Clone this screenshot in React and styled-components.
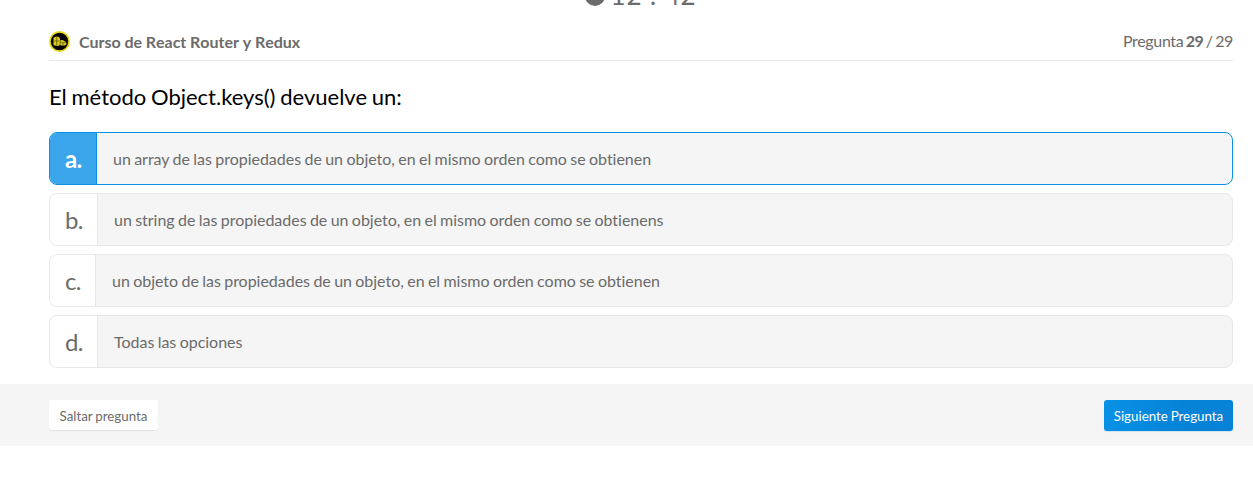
import React from "react";
import styled, { createGlobalStyle } from "styled-components";

const GlobalStyle = createGlobalStyle`
  * { box-sizing: border-box; }
  body {
    margin: 0;
    background: #fff;
    color: #6b6b6b;
    font-family: Lato, "Liberation Sans", sans-serif;
    font-size: 16px;
    font-variant-ligatures: none;
    overflow: hidden;
  }
`;

const Content = styled.main`
  padding: 0 20px 0 49px;
`;

const Timer = styled.div`
  display: flex;
  justify-content: center;
  align-items: flex-end;
  gap: 5px;
  height: 23px;
  padding-bottom: 15px;
  font-size: 26px;
  line-height: 26px;
  svg { flex: none; margin-bottom: 2px; }
`;

const Clock = styled.span`
  display: block;
  letter-spacing: 0.85px;
`;

const Header = styled.header`
  display: flex;
  align-items: center;
  height: 38px;
  padding-bottom: 1px;
  border-bottom: 1px solid #e8e8e8;
`;

const Course = styled.h1`
  flex: 1;
  margin: 0 0 0 9px;
  padding-top: 2px;
  font-size: 16px;
  line-height: 20px;
  font-weight: 700;
  letter-spacing: -0.04px;
  font-kerning: none;
`;

const Progress = styled.div`
  font-size: 16px;
  line-height: 20px;
  letter-spacing: -0.35px;
  word-spacing: -1.3px;
  b { letter-spacing: -0.5px; }
`;

const Question = styled.h2`
  margin: 21px 0 21px;
  color: #000;
  font-size: 22px;
  line-height: 29px;
  font-weight: 400;
  word-spacing: -0.9px;
`;

const Options = styled.div`
  display: flex;
  flex-direction: column;
  gap: 8px;
`;

const Option = styled.div`
  --line: ${(p) => (p.$selected ? "#0791e6" : "#e8e8e8")};
  display: flex;
  height: 53px;
  border: 1px solid var(--line);
  border-radius: 8px;
  background: #f5f5f5;
  overflow: hidden;
`;

const Letter = styled.div`
  flex: none;
  width: ${(p) => p.$width}px;
  padding-left: 15px;
  border-right: 1px solid var(--line);
  background: ${(p) => (p.$selected ? "#3aa5ea" : "#fff")};
  color: ${(p) => (p.$selected ? "#fff" : "#6b6b6b")};
  font-size: 24px;
  line-height: 51px;
  letter-spacing: -0.7px;
  font-weight: ${(p) => (p.$selected ? 700 : 400)};
`;

const Answer = styled.div`
  padding: 0 16px;
  line-height: 51px;
  letter-spacing: -0.02px;
  word-spacing: -0.7px;
`;

const Footer = styled.footer`
  display: flex;
  justify-content: space-between;
  align-items: flex-start;
  height: 62px;
  margin-top: 16px;
  padding: 16px 20px 0 49px;
  background: #f5f5f5;
`;

const Button = styled.button`
  width: ${(p) => (p.$primary ? 129 : 109)}px;
  height: ${(p) => (p.$primary ? 31 : 30)}px;
  padding: ${(p) => (p.$primary ? 1 : 2)}px 0 0;
  border: 0;
  border-radius: 3px;
  background: ${(p) => (p.$primary ? "linear-gradient(90deg, #0791e6, #0682d6 65%)" : "#fff")};
  box-shadow: 0 1px 1px ${(p) => (p.$primary ? "rgba(6,130,214,.15)" : "rgba(0,0,0,.08)")};
  color: ${(p) => (p.$primary ? "#fff" : "#6b6b6b")};
  font-family: inherit;
  font-size: 13.333px;
  line-height: 20px;
  word-spacing: -0.6px;
  white-space: nowrap;
`;

const OPTIONS = [
  { id: "a", width: 47, text: "un array de las propiedades de un objeto, en el mismo orden como se obtienen", selected: true },
  { id: "b", width: 48, text: "un string de las propiedades de un objeto, en el mismo orden como se obtienens" },
  { id: "c", width: 46, text: "un objeto de las propiedades de un objeto, en el mismo orden como se obtienen" },
  { id: "d", width: 48, text: "Todas las opciones" },
];

function CourseBadge() {
  return (
    <svg width="21" height="21" viewBox="0 0 21 21">
      <circle cx="10.5" cy="10.5" r="9.6" fill="#050505" stroke="#e8da1c" strokeWidth="1.7" />
      <g fill="#d9c91e">
        <path d="M4.6 6.8 7 5.4l3 .5 1 1.6v6.3l-1.6 1.1-4-.5-1-1z" />
        <path d="M11 9.2 13.5 9l3.5 2 .6 2-1.6 1.5H12l-1-.8z" />
      </g>
      <path d="M4.6 10h6M7.7 5.8v8.6M11.2 9.5v4M11.2 11.7h2.7l3-.2M14 11.7v2.5" fill="none" stroke="#443f08" strokeWidth=".6" />
    </svg>
  );
}

export default function App() {
  return (
    <>
      <GlobalStyle />
      <Content>
        <Timer>
          <svg width="20" height="20" viewBox="0 0 20 20">
            <circle cx="10" cy="10" r="10" fill="#6b6b6b" />
            <path d="M10 4v6h4" fill="none" stroke="#fff" strokeWidth="2" />
          </svg>
          <Clock>12 : 42</Clock>
        </Timer>
        <Header>
          <CourseBadge />
          <Course>Curso de React Router y Redux</Course>
          <Progress>
            Pregunta <b>29</b> / 29
          </Progress>
        </Header>
        <Question>El método Object.keys() devuelve un:</Question>
        <Options>
          {OPTIONS.map((o) => (
            <Option key={o.id} $selected={o.selected}>
              <Letter $selected={o.selected} $width={o.width}>{o.id}.</Letter>
              <Answer>{o.text}</Answer>
            </Option>
          ))}
        </Options>
      </Content>
      <Footer>
        <Button>Saltar pregunta</Button>
        <Button $primary>Siguiente Pregunta</Button>
      </Footer>
    </>
  );
}
